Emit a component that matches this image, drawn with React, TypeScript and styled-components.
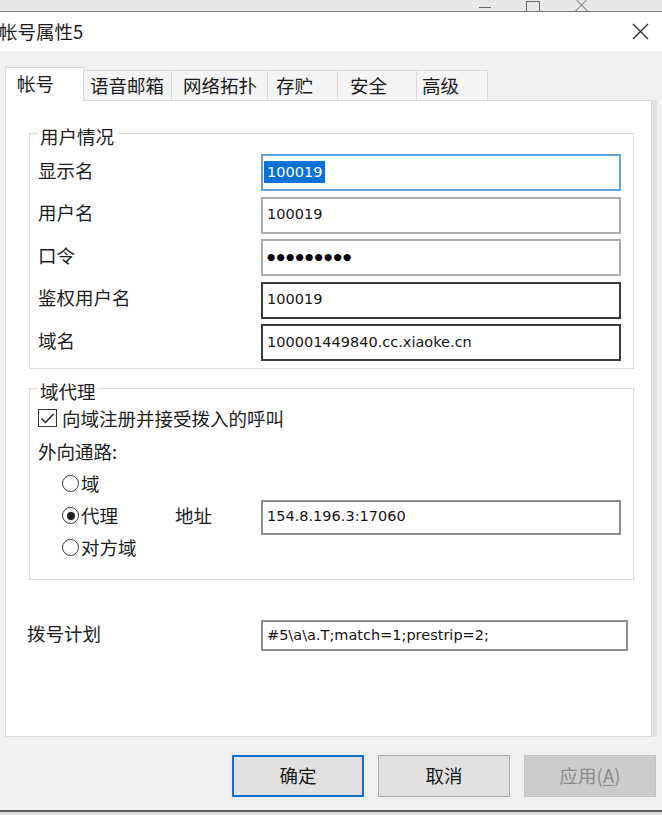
import React from "react";
import styled, { createGlobalStyle, css } from "styled-components";

const CJK = `"Noto Sans CJK SC", "Noto Sans", sans-serif`;
const LATIN = `"DejaVu Sans", "Noto Sans CJK SC", sans-serif`;

const GlobalStyle = createGlobalStyle`
  html, body { margin: 0; padding: 0; background: #dcdcdc; }
  body { font-family: ${CJK}; color: #1c1c1c; }
  *, *::before, *::after { box-sizing: border-box; }
`;

const Window = styled.div`
  width: 662px;
  height: 812px;
  display: flex;
  flex-direction: column;
  background: #f0f0f0;
  border-bottom: 2px solid #5c5c5c;
  overflow: hidden;
`;

const Strip = styled.div`
  flex: none;
  height: 12px;
  background: #e8e8e8;
  border-bottom: 1px solid #7a7a7a;
  display: flex;
  justify-content: flex-end;
  align-items: flex-start;
  gap: 35px;
  padding-right: 74px;
  overflow: hidden;
`;

const TitleBar = styled.div`
  flex: none;
  height: 39px;
  background: #ffffff;
  display: flex;
  align-items: center;
  justify-content: space-between;
  padding-right: 13px;
`;

const Title = styled.div`
  font-size: 18.5px;
  line-height: 1;
  color: #1a1a1a;
  margin-left: -1px;
`;

const Body = styled.div`
  flex: 1;
  display: flex;
  flex-direction: column;
  padding: 16px 0 0 5px;
`;

const TabRow = styled.div`
  display: flex;
  align-items: flex-end;
  height: 34px;
  position: relative;
  z-index: 1;
  margin-bottom: -1px;
`;

const Tab = styled.div<{ $active?: boolean; $w: number; $pl: number }>`
  width: ${(p) => p.$w}px;
  padding-left: ${(p) => p.$pl}px;
  display: flex;
  align-items: center;
  font-size: 18.5px;
  line-height: 1;
  color: #1a1a1a;
  border: 1px solid #d9d9d9;
  border-bottom: none;
  & + & { margin-left: -1px; }
  ${(p) =>
    p.$active
      ? css`
          height: 34px;
          background: #ffffff;
          position: relative;
          z-index: 1;
          padding-bottom: 3px;
        `
      : css`
          height: 30px;
          margin-bottom: 1px;
          background: #f4f4f4;
        `}
`;

const Panel = styled.div`
  height: 637px;
  margin-right: 10px;
  background: #ffffff;
  border: 1px solid #d9d9d9;
  box-shadow: 5px 0 0 #e4e4e4;
  padding: 18px 17px 0 21px;
  display: flex;
  flex-direction: column;
`;

const Group = styled.fieldset<{ $mt?: number; $pb: number; $pt: number }>`
  margin: ${(p) => p.$mt ?? 0}px 0 0 2px;
  padding: ${(p) => p.$pt}px 12px ${(p) => p.$pb}px 8px;
  border: 1px solid #dcdcdc;
  min-width: 0;
`;

const Legend = styled.legend`
  padding: 6px 3px 0 2px;
  font-size: 18.5px;
  line-height: 22px;
  color: #1c1c1c;
`;

const FormGrid = styled.div`
  display: grid;
  grid-template-columns: 223px 1fr;
  grid-auto-rows: 37px;
  row-gap: 5.5px;
  align-items: center;
`;

const Label = styled.div`
  font-size: 18.5px;
  line-height: 1;
  color: #1c1c1c;
  padding-bottom: 5px;
`;

type Tone = "focus" | "light" | "dark" | "mid";
const toneColor: Record<Tone, string> = {
  focus: "#5ea3e3",
  light: "#adadad",
  dark: "#3c3c3c",
  mid: "#8e8e8e",
};

const TextBox = styled.div<{ $tone: Tone; $h?: number }>`
  align-self: stretch;
  ${(p) => (p.$h ? `height: ${p.$h}px; align-self: center;` : "")}
  flex: 1;
  display: flex;
  align-items: center;
  padding: 0 0 2px 4px;
  background: #ffffff;
  border: 2px solid ${(p) => toneColor[p.$tone]};
  font-family: ${LATIN};
  font-size: 14.5px;
  color: #141414;
  white-space: nowrap;
  overflow: hidden;
`;

const Selected = styled.span`
  background: #0a72d4;
  color: #ffffff;
  line-height: 22px;
  padding: 0 3px;
  margin-left: -3px;
`;

const Dots = styled.span`
  font-family: "DejaVu Sans", sans-serif;
  font-size: 9.5px;
  letter-spacing: 1.2px;
  color: #000;
`;

const Row = styled.div<{ $h: number; $indent?: number }>`
  height: ${(p) => p.$h}px;
  display: flex;
  align-items: center;
  padding-left: ${(p) => p.$indent ?? 0}px;
`;

const Check = styled.label`
  display: flex;
  align-items: center;
  gap: 5px;
  font-size: 18.5px;
  line-height: 1;
  color: #1c1c1c;
  padding-bottom: 2px;
`;

const CheckBox = styled.span`
  width: 19px;
  height: 18px;
  border: 1.4px solid #333;
  display: flex;
  align-items: center;
  justify-content: center;
  flex: none;
`;

const RadioItem = styled.label<{ $w?: number }>`
  display: flex;
  align-items: center;
  gap: 2px;
  font-size: 18.5px;
  line-height: 1;
  color: #1c1c1c;
  padding-bottom: 3px;
  ${(p) => (p.$w ? `width: ${p.$w}px; flex: none;` : "")}
`;

const RadioCircle = styled.span<{ $on?: boolean }>`
  width: 17px;
  height: 17px;
  border: 1.4px solid #333;
  border-radius: 50%;
  display: flex;
  align-items: center;
  justify-content: center;
  flex: none;
  &::after {
    content: "";
    width: 8px;
    height: 8px;
    border-radius: 50%;
    background: ${(p) => (p.$on ? "#222" : "transparent")};
  }
`;

const AddrLabel = styled.div`
  width: 86px;
  flex: none;
  font-size: 18.5px;
  line-height: 1;
  padding-bottom: 3px;
`;

const DialRow = styled.div`
  display: grid;
  grid-template-columns: 234px 1fr;
  align-items: center;
  height: 31px;
  margin: 40px 6px 0 0;
`;

const ButtonRow = styled.div`
  display: flex;
  justify-content: flex-end;
  gap: 14px;
  margin-top: 18px;
  padding-right: 6px;
`;

const Button = styled.div<{ $variant?: "default" | "disabled" }>`
  width: 132px;
  height: 42px;
  display: flex;
  align-items: center;
  justify-content: center;
  font-size: 18.5px;
  line-height: 1;
  padding-bottom: 2px;
  background: #e1e1e1;
  border: 1px solid #adadad;
  color: #1a1a1a;
  ${(p) =>
    p.$variant === "default" &&
    css`
      border: 2px solid #0d6fcf;
    `}
  ${(p) =>
    p.$variant === "disabled" &&
    css`
      background: #cccccc;
      border-color: #c2c2c2;
      color: #8b8b8b;
    `}
`;

const Mnemonic = styled.span`
  text-decoration: underline;
  text-underline-offset: 2px;
`;

const tabs = [
  { label: "帐号", w: 79, pl: 11, active: true },
  { label: "语音邮箱", w: 89, pl: 6 },
  { label: "网络拓扑", w: 97, pl: 11 },
  { label: "存贮", w: 71, pl: 8 },
  { label: "安全", w: 80, pl: 12 },
  { label: "高级", w: 72, pl: 5 },
];

export default function App() {
  return (
    <>
      <GlobalStyle />
      <Window>
        <Strip>
          <svg width="12" height="11" viewBox="0 0 12 11">
            <line x1="0" y1="7.5" x2="12" y2="7.5" stroke="#666" strokeWidth="1" />
          </svg>
          <svg width="14" height="11" viewBox="0 0 14 11">
            <rect x="0.5" y="1.5" width="13" height="12" fill="none" stroke="#666" strokeWidth="1" />
          </svg>
          <svg width="13" height="11" viewBox="0 0 13 11">
            <path d="M0.5 -1 L12.5 11 M12.5 -1 L0.5 11" stroke="#666" strokeWidth="1" fill="none" />
          </svg>
        </Strip>
        <TitleBar>
          <Title>帐号属性5</Title>
          <svg width="17" height="17" viewBox="0 0 17 17">
            <path d="M1 1 L16 16 M16 1 L1 16" stroke="#2a2a2a" strokeWidth="1.3" fill="none" />
          </svg>
        </TitleBar>
        <Body>
          <TabRow>
            {tabs.map((t) => (
              <Tab key={t.label} $active={t.active} $w={t.w} $pl={t.pl}>
                {t.label}
              </Tab>
            ))}
          </TabRow>
          <Panel>
            <Group $pt={7} $pb={7}>
              <Legend>用户情况</Legend>
              <FormGrid>
                <Label>显示名</Label>
                <TextBox $tone="focus">
                  <Selected>100019</Selected>
                </TextBox>
                <Label>用户名</Label>
                <TextBox $tone="light">100019</TextBox>
                <Label>口令</Label>
                <TextBox $tone="light">
                  <Dots>●●●●●●●●●</Dots>
                </TextBox>
                <Label>鉴权用户名</Label>
                <TextBox $tone="dark">100019</TextBox>
                <Label>域名</Label>
                <TextBox $tone="dark">100001449840.cc.xiaoke.cn</TextBox>
              </FormGrid>
            </Group>
            <Group $mt={5} $pt={0} $pb={17}>
              <Legend>域代理</Legend>
              <Row $h={34}>
                <Check>
                  <CheckBox>
                    <svg width="15" height="13" viewBox="0 0 15 13">
                      <path d="M1.5 6.5 L5.5 10.5 L13.5 2" stroke="#222" strokeWidth="1.5" fill="none" />
                    </svg>
                  </CheckBox>
                  向域注册并接受拨入的呼叫
                </Check>
              </Row>
              <Row $h={36}>
                <Label>外向通路:</Label>
              </Row>
              <Row $h={26} $indent={24}>
                <RadioItem>
                  <RadioCircle />域
                </RadioItem>
              </Row>
              <Row $h={38} $indent={24}>
                <RadioItem $w={113}>
                  <RadioCircle $on />代理
                </RadioItem>
                <AddrLabel>地址</AddrLabel>
                <TextBox $tone="mid" $h={35}>154.8.196.3:17060</TextBox>
              </Row>
              <Row $h={26} $indent={24}>
                <RadioItem>
                  <RadioCircle />对方域
                </RadioItem>
              </Row>
            </Group>
            <DialRow>
              <Label>拨号计划</Label>
              <TextBox $tone="mid">#5\a\a.T;match=1;prestrip=2;</TextBox>
            </DialRow>
          </Panel>
          <ButtonRow>
            <Button $variant="default">确定</Button>
            <Button>取消</Button>
            <Button $variant="disabled">
              应用(<Mnemonic>A</Mnemonic>)
            </Button>
          </ButtonRow>
        </Body>
      </Window>
    </>
  );
}
